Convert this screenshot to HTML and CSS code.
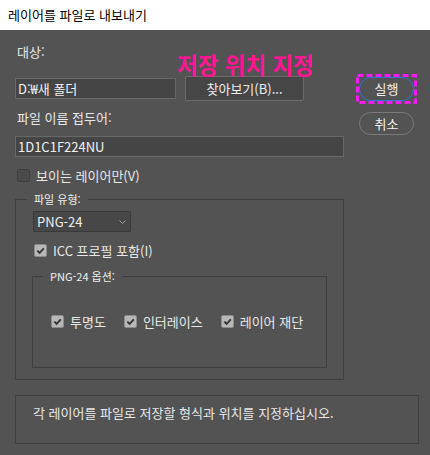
FILE: index.html
```html
<!DOCTYPE html>
<html lang="ko">
<head>
<meta charset="utf-8">
<title>레이어를 파일로 내보내기</title>
<link rel="stylesheet" href="styles.css">
</head>
<body>
<div class="titlebar">레이어를 파일로 내보내기</div>
<div class="dialog">
  <div class="annot">저장 위치 지정</div>
  <div class="top">
    <div class="main">
      <div class="label">대상:</div>
      <div class="dest-row">
        <div class="field dest">D:₩새 폴더</div>
        <button class="browse">찾아보기(B)...</button>
      </div>
      <div class="label label-prefix">파일 이름 접두어:</div>
      <div class="field prefix">1D1C1F224NU</div>
      <div class="check visible-only">
        <span class="box"></span><span>보이는 레이어만(V)</span>
      </div>
      <fieldset class="group">
        <legend>파일 유형:</legend>
        <div class="group-body">
          <div class="select"><span>PNG-24</span>
            <svg class="chev" width="7" height="4" viewBox="0 0 7 4"><path d="M0.5 0.5 L3.5 3.5 L6.5 0.5" fill="none" stroke="#a0a0a0" stroke-width="1"/></svg>
          </div>
          <div class="check icc">
            <span class="box on"><svg width="11" height="11" viewBox="0 0 11 11"><path d="M2.3 5.6 L4.6 7.8 L8.8 3.4" fill="none" stroke="#353535" stroke-width="1.9"/></svg></span><span>ICC 프로필 포함(I)</span>
          </div>
          <fieldset class="group inner">
            <legend>PNG-24 옵션:</legend>
            <div class="inner-body">
              <div class="check"><span class="box on"><svg width="11" height="11" viewBox="0 0 11 11"><path d="M2.3 5.6 L4.6 7.8 L8.8 3.4" fill="none" stroke="#353535" stroke-width="1.9"/></svg></span><span>투명도</span></div>
              <div class="check"><span class="box on"><svg width="11" height="11" viewBox="0 0 11 11"><path d="M2.3 5.6 L4.6 7.8 L8.8 3.4" fill="none" stroke="#353535" stroke-width="1.9"/></svg></span><span>인터레이스</span></div>
              <div class="check"><span class="box on"><svg width="11" height="11" viewBox="0 0 11 11"><path d="M2.3 5.6 L4.6 7.8 L8.8 3.4" fill="none" stroke="#353535" stroke-width="1.9"/></svg></span><span>레이어 재단</span></div>
            </div>
          </fieldset>
        </div>
      </fieldset>
    </div>
    <div class="side">
      <div class="run-wrap">
        <button class="pill run">실행</button>
        <svg class="dash" width="61" height="30" viewBox="0 0 61 30"><rect x="1.5" y="1.5" width="58" height="27" fill="none" stroke="#f01cf0" stroke-width="3" stroke-dasharray="6 3"/></svg>
      </div>
      <button class="pill cancel">취소</button>
    </div>
  </div>
  <div class="note">각 레이어를 파일로 저장할 형식과 위치를 지정하십시오.</div>
</div>
</body>
</html>
```
FILE: styles.css
```css
html, body {
  margin: 0;
  padding: 0;
}
body {
  width: 430px;
  height: 455px;
  overflow: hidden;
  background: #535353;
  font-family: "Noto Sans CJK KR", "Noto Sans", sans-serif;
  font-size: 13px;
  color: #e8e8e8;
}
.titlebar {
  height: 30px;
  background: #ffffff;
  color: #000000;
  padding-left: 8px;
  line-height: 30px;
}
.dialog {
  position: relative;
  padding: 0 12px 0 15px;
}
.annot {
  position: absolute;
  left: 177px;
  top: 23px;
  font-size: 22.5px;
  line-height: 22px;
  font-weight: 700;
  color: #ff1493;
  white-space: nowrap;
}
.top {
  display: flex;
  align-items: flex-start;
}
.main {
  width: 328px;
  padding-top: 15px;
  display: flex;
  flex-direction: column;
}
.label {
  line-height: 14px;
  padding-left: 2px;
}
.dest-row {
  display: flex;
  align-items: center;
  height: 25px;
  margin-top: 17px;
}
.field {
  box-sizing: border-box;
  height: 21px;
  background: #454545;
  border: 1px solid #686868;
  padding-left: 2px;
  line-height: 19px;
  color: #f2f2f2;
  white-space: nowrap;
}
.dest {
  width: 161px;
}
.browse {
  box-sizing: border-box;
  margin-left: 9px;
  width: 119px;
  height: 25px;
  padding: 0;
  background: #464646;
  border: 1px solid #6b6b6b;
  border-radius: 2px;
  color: #ececec;
  font: inherit;
  line-height: 23px;
}
.label-prefix {
  margin-top: 10px;
}
.prefix {
  margin-top: 11px;
  width: 329px;
}
.check {
  display: flex;
  align-items: center;
  gap: 6px;
  height: 13px;
  line-height: 14px;
  white-space: nowrap;
}
.visible-only {
  margin-top: 12px;
  padding-left: 2px;
}
.box {
  box-sizing: border-box;
  width: 13px;
  height: 13px;
  flex: none;
  border: 1px solid #3e3e3e;
  border-radius: 2px;
  background: #4a4a4a;
  display: flex;
  align-items: center;
  justify-content: center;
}
.box.on {
  background: #b7b7b7;
  border-color: #8c8c8c;
}
.group {
  margin: 0;
  padding: 0;
  min-width: 0;
  border: 1px solid #3f3f3f;
}
.group legend {
  margin-left: 11px;
  padding: 0 7px;
  font-size: 11px;
  line-height: 13px;
  color: #f0f0f0;
}
.main > .group {
  margin-top: 11px;
  width: 329px;
  box-sizing: border-box;
}
.group-body {
  padding: 5px 16px 11px 16px;
}
.select {
  box-sizing: border-box;
  margin-left: 1px;
  width: 98px;
  height: 21px;
  background: #474747;
  border: 1px solid #3a3a3a;
  border-radius: 1px;
  padding: 0 4px 0 3px;
  display: flex;
  align-items: center;
  justify-content: space-between;
  line-height: 19px;
  color: #f0f0f0;
}
.chev {
  display: block;
}
.icc {
  margin-top: 12px;
  padding-left: 2px;
}
.group.inner {
  margin-top: 13px;
}
.group.inner legend {
  margin-left: 10px;
}
.inner-body {
  display: flex;
  gap: 18px;
  padding: 32px 0 39px 18px;
}
.side {
  margin-left: 13px;
  padding-top: 44px;
  display: flex;
  flex-direction: column;
  align-items: flex-start;
}
.run-wrap {
  position: relative;
  padding: 3px;
}
.dash {
  position: absolute;
  left: 0;
  top: 0;
}
.pill {
  display: block;
  box-sizing: border-box;
  width: 55px;
  height: 24px;
  padding: 0;
  border: 1px solid #7a7a7a;
  border-radius: 12px;
  background: transparent;
  color: #f2f2f2;
  font: inherit;
  line-height: 22px;
}
.run {
  border-color: #2f74d0;
}
.cancel {
  margin: 8px 0 0 3px;
  height: 23px;
}
.note {
  box-sizing: border-box;
  margin-top: 15px;
  width: 404px;
  height: 49px;
  border: 1px solid #3f3f3f;
  padding: 10px 0 0 17px;
  line-height: 14px;
  white-space: nowrap;
}
```
